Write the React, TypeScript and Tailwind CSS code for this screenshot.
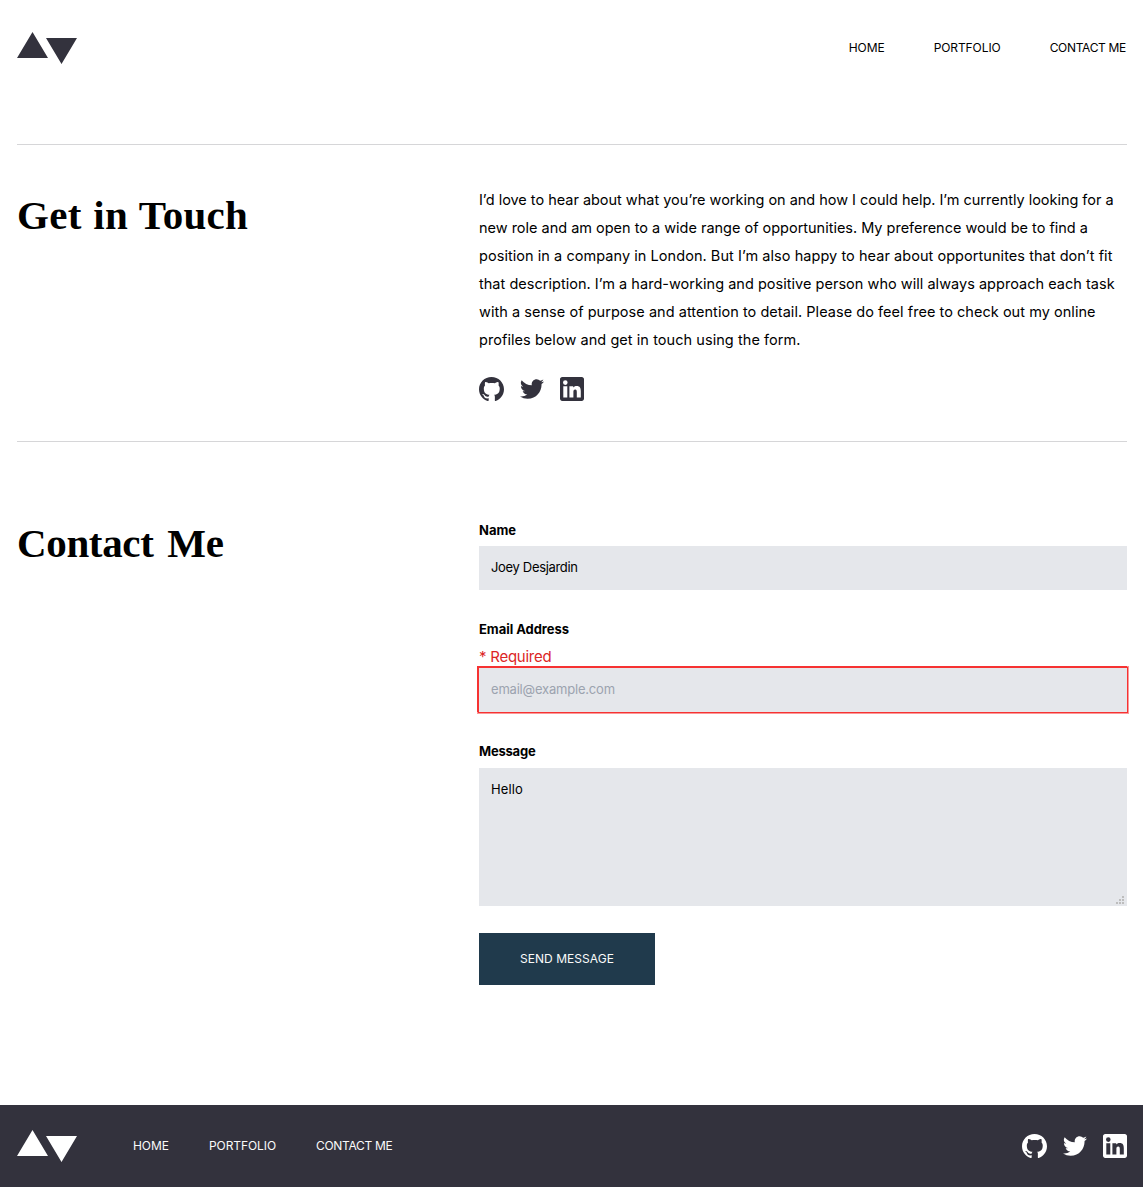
import type { ReactNode } from 'react';

const navItems = [
  { label: 'HOME', spacing: 'tracking-[-0.05px]' },
  { label: 'PORTFOLIO', spacing: 'tracking-[-0.08px]' },
  { label: 'CONTACT ME', spacing: 'tracking-[-0.32px]' },
];

const introLines = [
  { text: 'I’d love to hear about what you’re working on and how I could help. I’m currently looking for a', spacing: 'tracking-[-0.022px]' },
  { text: 'new role and am open to a wide range of opportunities. My preference would be to find a', spacing: 'tracking-[-0.012px]' },
  { text: 'position in a company in London. But I’m also happy to hear about opportunites that don’t fit', spacing: 'tracking-[0.052px]' },
  { text: 'that description. I’m a hard-working and positive person who will always approach each task', spacing: 'tracking-[0.025px]' },
  { text: 'with a sense of purpose and attention to detail. Please do feel free to check out my online', spacing: 'tracking-[0.042px]' },
  { text: 'profiles below and get in touch using the form.', spacing: 'tracking-[0.06px]' },
];

function Logo() {
  return (
    <svg width="60" height="32" viewBox="0 0 60 32" fill="currentColor" className="block">
      <path d="M15.5 0 31 26H0zM44.5 32 29 6h31z" />
    </svg>
  );
}

function SocialLinks() {
  return (
    <div className="flex items-center">
      <a href="#github" aria-label="GitHub">
        <svg width="25" height="24" viewBox="0 0 25 24" fill="currentColor" className="block">
          <path d="M12.5 0C5.594 0 0 5.51 0 12.305c0 5.437 3.582 10.048 8.547 11.674.625.116 1.154-.065 1.154-.392 0-.292-.011-1.266-.016-2.292-3.477.743-4.51-1.65-4.51-1.65-.569-1.42-1.39-1.8-1.39-1.8-1.133-.764.087-.748.087-.748 1.255.086 1.914 1.268 1.914 1.268 1.115 1.881 3.227 1.338 3.941 1.024.113-.797.434-1.338.792-1.646-2.776-.308-5.694-1.366-5.694-6.08 0-1.343.484-2.44 1.286-3.302-.14-.31-.562-1.562.11-3.256 0 0 1.047-.33 3.437 1.261 1-.273 2.063-.409 3.125-.415 1.063.006 2.125.142 3.125.415 2.375-1.591 3.422-1.261 3.422-1.261.672 1.694.25 2.945.125 3.256.797.861 1.281 1.959 1.281 3.302 0 4.727-2.921 5.767-5.703 6.07.438.369.844 1.123.844 2.276 0 1.647-.016 2.97-.016 3.37 0 .322.219.707.86.584C21.422 22.348 25 17.734 25 12.305 25 5.51 19.403 0 12.5 0z" />
        </svg>
      </a>
      <a href="#twitter" aria-label="Twitter" className="ml-4">
        <svg width="24" height="20" viewBox="0 0 24 20" fill="currentColor" className="block">
          <path d="M24 2.557a9.83 9.83 0 01-2.828.775A4.932 4.932 0 0023.337.608a9.864 9.864 0 01-3.127 1.195A4.916 4.916 0 0016.616.248c-3.179 0-5.515 2.966-4.797 6.045A13.978 13.978 0 011.671 1.149a4.93 4.93 0 001.523 6.574 4.903 4.903 0 01-2.229-.616c-.054 2.281 1.581 4.415 3.949 4.89a4.935 4.935 0 01-2.224.084 4.928 4.928 0 004.6 3.419A9.9 9.9 0 010 17.54a13.94 13.94 0 007.548 2.212c9.142 0 14.307-7.721 13.995-14.646A10.025 10.025 0 0024 2.557z" />
        </svg>
      </a>
      <a href="#linkedin" aria-label="LinkedIn" className="ml-4">
        <svg width="24" height="24" viewBox="0 0 24 24" fill="currentColor" fillRule="evenodd" className="block">
          <path d="M21.8 0H2.2C1 0 0 1 0 2.2v19.6C0 23 1 24 2.2 24h19.6c1.2 0 2.2-1 2.2-2.2V2.2C24 1 23 0 21.8 0zM7.3 20.5H3.3V9.3h4zM5.3 7.9a2.3 2.3 0 110-4.6 2.3 2.3 0 010 4.6zM20.8 20.5h-4v-5.4c0-1.5-.2-2.6-1.6-2.6-1.5 0-1.8 1.1-1.8 2.6v5.4h-4V9.3h3.8v1.3c.6-1 1.9-1.7 3.4-1.7 3.5 0 4.2 2.2 4.2 5.3z" />
        </svg>
      </a>
    </div>
  );
}

function Heading({ children, spacing }: { children: ReactNode; spacing: string }) {
  return (
    <h1 className={`w-[462px] shrink-0 whitespace-nowrap font-['Liberation_Serif','Times_New_Roman',serif] text-[41px] font-bold leading-[42px] ${spacing}`}>
      {children}
    </h1>
  );
}

export default function App() {
  return (
    <div className="flex h-[1187px] flex-col bg-white font-['Inter',sans-serif] text-black">
      <header className="flex items-center justify-between px-[17px] pt-8">
        <div className="text-[#33323d]">
          <Logo />
        </div>
        <nav className="flex gap-[49px] text-[12px] leading-4">
          {navItems.map((item) => (
            <a key={item.label} href="#nav" className={item.spacing}>
              {item.label}
            </a>
          ))}
        </nav>
      </header>

      <main className="mx-[17px] mr-4 mt-20">
        <section className="flex h-[298px] border-y border-[#d6d6d8] pt-[41px]">
          <div className="pt-2">
            <Heading spacing="tracking-[0.3px] [word-spacing:1px]">Get in Touch</Heading>
          </div>
          <div>
            <p className="text-[14.5px] leading-7">
              {introLines.map((line) => (
                <span key={line.text} className="block whitespace-nowrap">
                  <span className={line.spacing}>{line.text}</span>
                </span>
              ))}
            </p>
            <div className="mt-[23px] text-[#33323d]">
              <SocialLinks />
            </div>
          </div>
        </section>

        <section className="flex pt-20">
          <Heading spacing="tracking-[-0.35px] [word-spacing:4px]">Contact Me</Heading>
          <form className="flex-1 text-[13px]" onSubmit={(e) => e.preventDefault()} noValidate>
            <label htmlFor="name" className="block h-6 font-bold leading-4">
              <span className="tracking-[0px]">Name</span>
            </label>
            <input id="name" defaultValue="Joey Desjardin" className="block h-11 w-full bg-[#e5e7eb] px-3 pb-0.5 tracking-[-0.33px] outline-none" />

            <label htmlFor="email" className="mt-[31px] block h-[27px] font-bold leading-4">
              <span className="tracking-[-0.05px]">Email Address</span>
            </label>
            <p className="h-5 text-[15px] leading-[18px] tracking-[-0.25px] text-[#dc2626]">* Required</p>
            <input id="email" placeholder="email@example.com" className="block h-11 w-full bg-[#e5e7eb] px-3 pb-0.5 tracking-[-0.2px] shadow-[0_0_0_1px_#f63232,-1px_-1px_0_1px_#f63232,0_0_0_2px_#fb9898] outline-none placeholder:text-[#9ca3af]" />

            <label htmlFor="message" className="mt-[31px] block h-[25px] font-bold leading-4">
              <span className="tracking-[-0.2px]">Message</span>
            </label>
            <div className="relative">
              <textarea id="message" defaultValue="Hello" className="block h-[138px] w-full resize-none bg-[#e5e7eb] px-3 py-[11px] leading-5 tracking-[0.1px] outline-none" />
              <svg width="8" height="8" viewBox="0 0 8 8" fill="#bdbdbd" shapeRendering="crispEdges" className="absolute bottom-0.5 right-[3px]">
                <path d="M6 0h2v2H6zM3 3h2v2H3zM6 3h2v2H6zM0 6h2v2H0zM3 6h2v2H3zM6 6h2v2H6z" />
              </svg>
            </div>

            <button type="submit" className="mt-[27px] flex h-[52px] w-44 items-center justify-center bg-[#203a4c] text-[12px] text-[#fafafa]">
              <span className="tracking-[0.05px]">SEND MESSAGE</span>
            </button>
          </form>
        </section>
      </main>

      <footer className="mt-auto flex h-[82px] items-center bg-[#33323d] pl-[17px] pr-4 text-white">
        <Logo />
        <nav className="ml-14 flex flex-1 gap-10 text-[12px] leading-4 text-[#fafafa]">
          {navItems.map((item) => (
            <a key={item.label} href="#nav" className={item.spacing}>
              {item.label}
            </a>
          ))}
        </nav>
        <SocialLinks />
      </footer>
    </div>
  );
}
